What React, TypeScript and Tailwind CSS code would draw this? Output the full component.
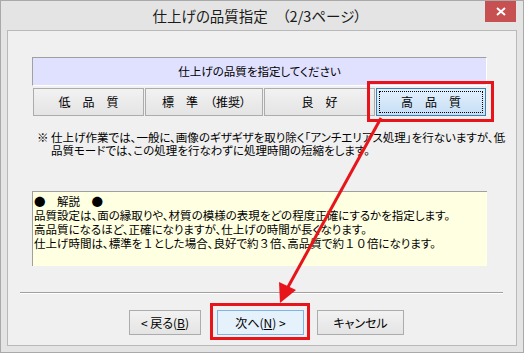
const jp = "font-['Noto_Sans_CJK_JP','Noto_Sans',sans-serif] [font-feature-settings:'palt']"

function QualityButton({ label, width, active }: { label: string; width: string; active?: boolean }) {
  return (
    <div
      className={
        'relative h-[28px] flex items-center justify-center text-[12px] text-black border ' +
        width +
        (active
          ? ' border-[#3c7fb1] bg-gradient-to-b from-[#e3f0fd] to-[#c6def5]'
          : ' border-[#acacac] bg-gradient-to-b from-[#f2f2f2] to-[#e4e4e4]')
      }
    >
      {active && <span className="absolute inset-[2px] border border-dotted border-black" />}
      <span className="whitespace-pre">{label}</span>
    </div>
  )
}

function NavButton({ children, width, primary }: { children: React.ReactNode; width: string; primary?: boolean }) {
  return (
    <div
      className={
        'h-[25px] flex items-center justify-center text-[12px] text-black border ' +
        width +
        (primary ? ' border-[#7eb4ea] bg-[#e5f1fb]' : ' border-[#acacac] bg-gradient-to-b from-[#f2f2f2] to-[#e4e4e4]')
      }
    >
      {children}
    </div>
  )
}

// 全角数字は等幅のまま表示する
function Wide({ children }: { children: React.ReactNode }) {
  return <span className="[font-feature-settings:normal]">{children}</span>
}

export default function App() {
  return (
    <div className={'relative w-[524px] h-[353px] bg-[#e4e4e4] border border-[#a9a9a9] flex flex-col ' + jp}>
      {/* タイトルバー */}
      <div className="relative h-[29px] flex items-center justify-center pr-[10px] text-[14.5px] text-[#1a1a1a]">
        仕上げの品質指定　（2/3ページ）
        <div className="absolute right-[7px] top-0 w-[31px] h-[21px] bg-[#c75050] flex items-center justify-center">
          <svg width="10" height="9" viewBox="0 0 10 9">
            <path d="M1 1 L9 8 M9 1 L1 8" stroke="white" strokeWidth="2" />
          </svg>
        </div>
      </div>

      {/* クライアント領域 */}
      <div className="mx-[6px] h-[316px] bg-[#f0f0f0] border border-[#b9b9b9] flex flex-col">
        <div className="ml-[24px] mt-[26px] w-[455px] h-[29px] bg-[#e0e0ff] border-t border-l border-t-[#a0a0a0] border-l-[#a0a0a0] border-b border-r border-b-white border-r-white flex items-center justify-center text-[11.5px] text-black">
          仕上げの品質を指定してください
        </div>

        <div className="ml-[25px] mt-[2px] flex gap-[1px]">
          <QualityButton label="低　品　質" width="w-[111px]" />
          <QualityButton label="標　準　（推奨）" width="w-[118px]" />
          <QualityButton label="良　好" width="w-[111px]" />
          <QualityButton label="高　品　質" width="w-[110px]" active />
        </div>

        <div className="ml-[29px] mt-[15px] text-[11.5px] leading-[13px] text-black whitespace-nowrap">
          <div>※ 仕上げ作業では、一般に、画像のギザギザを取り除く「アンチエリアス処理」を行ないますが、低</div>
          <div className="pl-[14px]">品質モードでは、この処理を行なわずに処理時間の短縮をします。</div>
        </div>

        <div className="ml-[24px] mt-[34px] w-[455px] h-[75px] bg-[#ffffe1] border-t border-l border-t-[#a0a0a0] border-l-[#a0a0a0] pl-[1px] pt-[2px] text-[11.5px] leading-[14px] text-black whitespace-nowrap">
          <div>●　解説　●</div>
          <div>品質設定は、面の縁取りや、材質の模様の表現をどの程度正確にするかを指定します。</div>
          <div>高品質になるほど、正確になりますが、仕上げの時間が長くなります。</div>
          <div>
            仕上げ時間は、標準を<Wide>１</Wide>とした場合、良好で約<Wide>３</Wide>倍、高品質で約<Wide>１０</Wide>倍になります。
          </div>
        </div>

        <div className="ml-[12px] mt-[26px] w-[483px] border-t border-t-[#a0a0a0] border-b border-b-white" />

        <div className="mt-[16px] flex">
          <div className="ml-[121px]">
            <NavButton width="w-[72px]">
              &lt; 戻る(<span className="underline">B</span>)
            </NavButton>
          </div>
          <div className="ml-[16px]">
            <NavButton width="w-[87px]" primary>
              次へ(<span className="underline">N</span>) &gt;
            </NavButton>
          </div>
          <div className="ml-[13px]">
            <NavButton width="w-[87px]">キャンセル</NavButton>
          </div>
        </div>
      </div>

      {/* 注釈 */}
      <div className="absolute left-[366px] top-[80px] w-[127px] h-[41px] border-[3px] border-[#e8141b]" />
      <div className="absolute left-[209px] top-[302px] w-[100px] h-[37px] border-[3px] border-[#e8141b]" />
      <svg className="absolute -left-px -top-px pointer-events-none" width="524" height="353" viewBox="0 0 524 353">
        <line x1="381" y1="118" x2="288" y2="287" stroke="#e8141b" strokeWidth="3" />
        <polygon points="280,303 296,290 279,282" fill="#e8141b" />
      </svg>
    </div>
  )
}
